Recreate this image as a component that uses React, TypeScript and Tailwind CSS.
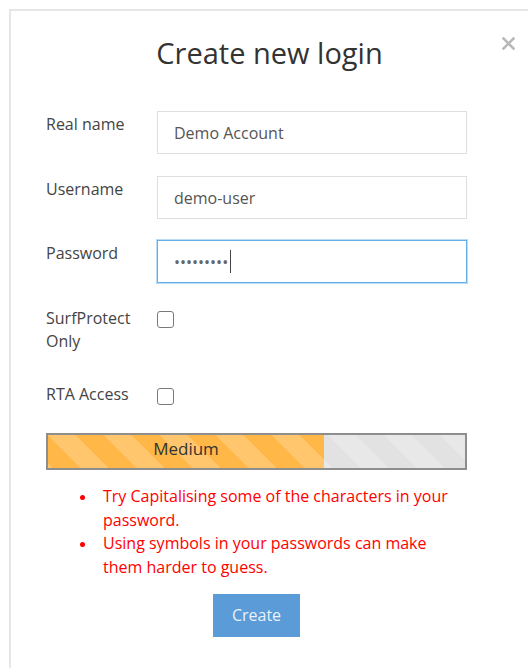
import { useState } from "react";

const stripes =
  "bg-[linear-gradient(45deg,rgba(255,255,255,0.2)_25%,transparent_25%,transparent_50%,rgba(255,255,255,0.2)_50%,rgba(255,255,255,0.2)_75%,transparent_75%,transparent)] bg-[length:56px_56px]";

const inputCls =
  "h-[43px] w-[310px] border border-[#dedede] bg-white pl-[16px] text-[16px] text-[#555] outline-none";

const labelCls = "w-[111px] pt-[2px] text-[16px] leading-[23px] text-[#444]";

function Checkbox({ checked, onToggle, className }: { checked: boolean; onToggle: () => void; className?: string }) {
  return (
    <button
      type="button"
      onClick={onToggle}
      className={`h-[17px] w-[17px] shrink-0 rounded-[3px] border-[1.5px] border-[#7a7a7a] bg-white ${className ?? ""}`}
    >
      {checked && <span className="block h-full w-full rounded-[1px] bg-[#555]" />}
    </button>
  );
}

export default function App() {
  const [surfOnly, setSurfOnly] = useState(false);
  const [rta, setRta] = useState(false);

  const hints = [
    "Try Capitalising some of the characters in your password.",
    "Using symbols in your passwords can make them harder to guess.",
  ];

  return (
    <div className="min-h-screen bg-white font-['Open_Sans',sans-serif]">
      <div className="relative ml-[9px] mt-[9px] min-h-[659px] w-[519px] border-l-2 border-t-2 border-[#e6e6e6] bg-white">
        {/* close */}
        <button type="button" className="absolute right-[13px] top-[26px] h-[13px] w-[13px]" aria-label="Close">
          <svg viewBox="0 0 13 13" className="h-[13px] w-[13px]">
            <path d="M1.5 1.5l10 10M11.5 1.5l-10 10" stroke="#b8b8b8" strokeWidth={2.6} strokeLinecap="square" />
          </svg>
        </button>

        <h1 className="pt-[23px] text-center text-[29px] leading-[38px] text-[#333]">Create new login</h1>

        <form className="ml-[35px] mt-[39px] w-[421px]" onSubmit={e => e.preventDefault()}>
          <div className="flex items-start">
            <label className={labelCls}>Real name</label>
            <input className={inputCls} defaultValue="Demo Account" readOnly />
          </div>
          <div className="mt-[22px] flex items-start">
            <label className={labelCls}>Username</label>
            <input className={inputCls} defaultValue="demo-user" readOnly />
          </div>
          <div className="mt-[21px] flex items-start">
            <label className={labelCls}>Password</label>
            <div className="flex h-[43px] w-[310px] items-center border border-[#66afe9] bg-white pl-[16px] shadow-[0_0_0_1px_rgba(102,175,233,0.45)]">
              <span className="text-[16px] text-[#666]">•••••••••</span>
              <span className="ml-[2px] h-[23px] w-px bg-[#444]" />
            </div>
          </div>

          <div className="mt-[22px] flex items-start">
            <label className={`${labelCls} pr-[10px]`}>SurfProtect Only</label>
            <Checkbox checked={surfOnly} onToggle={() => setSurfOnly(!surfOnly)} className="mt-[6px]" />
          </div>
          <div className="mt-[28px] flex items-start">
            <label className={labelCls}>RTA Access</label>
            <Checkbox checked={rta} onToggle={() => setRta(!rta)} className="mt-[7px]" />
          </div>

          {/* strength meter */}
          <div className={`mt-[27px] flex h-[37px] border-2 border-[#8e8e8e] bg-[#e2e2e2] ${stripes}`}>
            <div className={`flex h-full w-[276px] justify-center bg-[#ffb848] pt-[2px] ${stripes}`}>
              <span className="text-[17px] leading-[23px] text-[#333]">Medium</span>
            </div>
          </div>

          <ul className="mt-[15px] pl-[34px]">
            {hints.map(h => (
              <li key={h} className="flex text-[16px] leading-[23.7px] text-[#f00]">
                <span className="mr-[18px] mt-[9.5px] h-[5px] w-[5px] shrink-0 rounded-full bg-[#f00]" />
                <span className="w-[366px]">{h}</span>
              </li>
            ))}
          </ul>

          <div className="mt-[14px] flex justify-center">
            <button type="submit" className="h-[43px] w-[87px] bg-[#5a9bd8] text-[16px] text-[#eaf2fa]">
              Create
            </button>
          </div>
        </form>
      </div>
    </div>
  );
}
